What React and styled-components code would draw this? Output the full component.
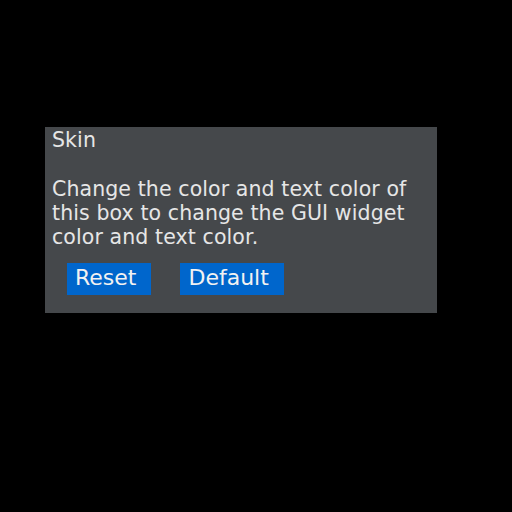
import React from "react";
import styled, { createGlobalStyle } from "styled-components";

const Global = createGlobalStyle`
  html, body { margin: 0; padding: 0; background: #000; }
  body { width: 512px; height: 512px; overflow: hidden; }
`;

const Page = styled.div`
  padding: 127px 0 0 45px;
`;

const Panel = styled.section`
  width: 392px;
  height: 186px;
  box-sizing: border-box;
  background: #45484b;
  color: #e6e6e6;
  font-family: "DejaVu Sans", sans-serif;
  font-size: 20.5px;
  letter-spacing: 0.1px;
  line-height: 24.3px;
  padding: 1px 7px 0 7px;
  display: flex;
  flex-direction: column;
`;

const Title = styled.div`
  margin-bottom: 24.3px;
`;

const Text = styled.p`
  margin: 0;
  width: 376px;
`;

const ButtonRow = styled.div`
  display: flex;
  gap: 29px;
  margin: 13.5px 0 0 15px;
`;

const Button = styled.button`
  box-sizing: border-box;
  background: #0066cc;
  color: #f2f2f2;
  border: none;
  border-radius: 0;
  font-family: "DejaVu Sans", sans-serif;
  font-size: 22px;
  line-height: 28px;
  height: 32px;
  padding: 1px 15px 3px 8px;
  margin: 0;
  cursor: pointer;
`;

export default function App() {
  return (
    <>
      <Global />
      <Page>
        <Panel>
          <Title>Skin</Title>
          <Text>
            Change the color and text color of this box to change the GUI widget color and text color.
          </Text>
          <ButtonRow>
            <Button>Reset</Button>
            <Button>Default</Button>
          </ButtonRow>
        </Panel>
      </Page>
    </>
  );
}
